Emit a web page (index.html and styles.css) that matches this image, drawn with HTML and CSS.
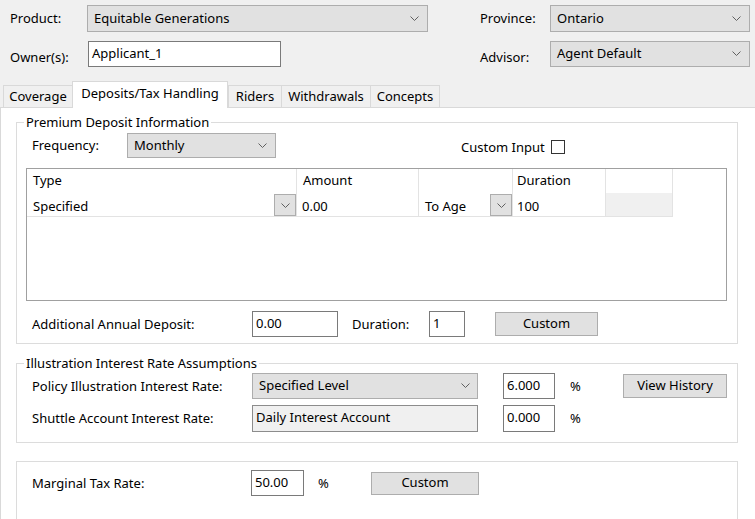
FILE: index.html
```html
<!DOCTYPE html>
<html lang="en">
<head>
<meta charset="utf-8">
<title>Deposits/Tax Handling</title>
<link rel="stylesheet" href="styles.css">
</head>
<body>
<div class="top">
  <span class="lbl">Product:</span>
  <div class="combo"><span>Equitable Generations</span><svg class="chev" width="9" height="5" viewBox="0 0 9 5"><path d="M0.5 0.5 4.5 4.5 8.5 0.5"/></svg></div>
  <span></span>
  <span class="lbl">Province:</span>
  <div class="combo"><span>Ontario</span><svg class="chev" width="9" height="5" viewBox="0 0 9 5"><path d="M0.5 0.5 4.5 4.5 8.5 0.5"/></svg></div>
  <span class="lbl lbl2">Owner(s):</span>
  <div class="text owner">Applicant_1</div>
  <span></span>
  <span class="lbl lbl2">Advisor:</span>
  <div class="combo"><span>Agent Default</span><svg class="chev" width="9" height="5" viewBox="0 0 9 5"><path d="M0.5 0.5 4.5 4.5 8.5 0.5"/></svg></div>
</div>

<div class="tabs">
  <div class="tab t-cov">Coverage</div>
  <div class="tab active t-dep">Deposits/Tax Handling</div>
  <div class="tab t-rid">Riders</div>
  <div class="tab t-wd">Withdrawals</div>
  <div class="tab last t-con">Concepts</div>
</div>

<div class="page">
  <fieldset class="group g1">
    <legend>Premium Deposit Information</legend>
    <div class="freq">
      <span class="lbl freq-lbl">Frequency:</span>
      <div class="combo freq-combo"><span>Monthly</span><svg class="chev" width="9" height="5" viewBox="0 0 9 5"><path d="M0.5 0.5 4.5 4.5 8.5 0.5"/></svg></div>
      <div class="custom"><span>Custom Input</span><span class="check"></span></div>
    </div>

    <div class="grid">
      <div class="cell h">Type</div>
      <div class="cell h">Amount</div>
      <div class="cell h"></div>
      <div class="cell h dur">Duration</div>
      <div class="cell h"></div>

      <div class="cell d"><span class="ct">Specified</span><span class="dd"><svg class="chev" width="9" height="5" viewBox="0 0 9 5"><path d="M0.5 0.5 4.5 4.5 8.5 0.5"/></svg></span></div>
      <div class="cell d amt"><span class="ct">0.00</span></div>
      <div class="cell d"><span class="ct">To Age</span><span class="dd"><svg class="chev" width="9" height="5" viewBox="0 0 9 5"><path d="M0.5 0.5 4.5 4.5 8.5 0.5"/></svg></span></div>
      <div class="cell d dur"><span class="ct">100</span></div>
      <div class="cell d grey"></div>
    </div>

    <div class="row add">
      <span class="lbl w220">Additional Annual Deposit:</span>
      <div class="text w86">0.00</div>
      <span class="lbl dur-lbl">Duration:</span>
      <div class="text w36">1</div>
      <div class="btn btn-custom1">Custom</div>
    </div>
  </fieldset>

  <fieldset class="group g2">
    <legend>Illustration Interest Rate Assumptions</legend>
    <div class="row r1">
      <span class="lbl w220">Policy Illustration Interest Rate:</span>
      <div class="combo rate-combo"><span>Specified Level</span><svg class="chev" width="9" height="5" viewBox="0 0 9 5"><path d="M0.5 0.5 4.5 4.5 8.5 0.5"/></svg></div>
      <div class="text pct-box">6.000</div>
      <span class="pct">%</span>
      <div class="btn btn-hist">View History</div>
    </div>
    <div class="row r2">
      <span class="lbl w220">Shuttle Account Interest Rate:</span>
      <div class="readonly">Daily Interest Account</div>
      <div class="text pct-box">0.000</div>
      <span class="pct">%</span>
    </div>
  </fieldset>

  <div class="group g3">
    <div class="row r3">
      <span class="lbl w219">Marginal Tax Rate:</span>
      <div class="text w53">50.00</div>
      <span class="pct pct3">%</span>
      <div class="btn btn-custom2">Custom</div>
    </div>
  </div>
</div>
</body>
</html>
```

FILE: styles.css
```css
* { box-sizing: border-box; }
html, body { margin: 0; padding: 0; }
body {
  width: 755px;
  height: 519px;
  overflow: hidden;
  background: #f0f0f0;
  font-family: "Noto Sans", "Open Sans", sans-serif;
  font-size: 13px;
  line-height: 17px;
  color: #000;
}

.chev { flex: none; display: block; }
.chev path { fill: none; stroke: #606060; stroke-width: 1; }

/* top form */
.top {
  display: grid;
  grid-template-columns: 77px 341px 52px 70px 200px;
  grid-template-rows: 27px 26px;
  row-gap: 9px;
  padding: 5px 0 0 10px;
}
.lbl { align-self: center; white-space: nowrap; }
.lbl2 { padding-top: 6px; }

.combo {
  display: flex;
  align-items: center;
  justify-content: space-between;
  background: #e1e1e1;
  border: 1px solid #adadad;
  padding: 0 8px 1px 6px;
}
.text {
  display: flex;
  align-items: center;
  background: #fff;
  border: 1px solid #7a7a7a;
  padding: 0 4px 2px 3px;
}
.owner { width: 193px; margin-left: 1px; }

/* tabs */
.tabs {
  display: flex;
  align-items: flex-end;
  height: 27px;
  margin-top: 14px;
  padding-left: 3px;
  border-bottom: 1px solid #d9d9d9;
}
.tab {
  height: 22px;
  display: flex;
  align-items: center;
  justify-content: center;
  background: #f0f0f0;
  border-top: 1px solid #d9d9d9;
  border-left: 1px solid #d9d9d9;
  padding-bottom: 1px;
}
.tab.last { border-right: 1px solid #d9d9d9; }
.tab.active {
  height: 27px;
  margin-bottom: -1px;
  background: #fff;
  border-right: 1px solid #d9d9d9;
  padding-bottom: 4px;
  position: relative;
  z-index: 1;
}
.t-cov { width: 69px; }
.t-dep { width: 156px; }
.t-rid { width: 53px; }
.t-wd { width: 89px; }
.t-con { width: 70px; }

/* tab page */
.page {
  background: #fff;
  height: 411px;
  border-left: 1px solid #d9d9d9;
  overflow: hidden;
  padding-top: 6px;
}

.group {
  margin: 0 17px 0 15px;
  border: 1px solid #dcdcdc;
  padding: 2px 10px 6px 9px;
  min-width: 0;
}
.group legend {
  padding: 0 2px;
  margin-left: -2px;
  line-height: 17px;
}

.freq { display: flex; align-items: center; height: 25px; padding-left: 6px; }
.freq-lbl { width: 95px; }
.freq-combo { width: 149px; height: 25px; }
.custom {
  display: flex;
  align-items: center;
  gap: 6px;
  margin-left: 185px;
  margin-top: 3px;
}
.check { width: 14px; height: 14px; border: 1px solid #333; background: #fff; }

/* deposit grid */
.grid {
  margin-top: 10px;
  height: 133px;
  border: 1px solid #a0a0a0;
  background: #fff;
  display: grid;
  grid-template-columns: 270px 122px 94px 93px 67px;
  grid-template-rows: 24px 24px;
  align-content: start;
}
.cell {
  display: flex;
  border-right: 1px solid #e3e3e3;
  padding-left: 6px;
}
.cell.h { align-items: center; padding-bottom: 1px; }
.cell.d { border-bottom: 1px solid #e3e3e3; align-items: stretch; }
.cell.amt { padding-left: 5px; }
.cell.dur { padding-left: 4px; }
.cell.grey { background: #f0f0f0; }
.ct { display: flex; align-items: center; padding-top: 3px; }
.dd {
  margin-left: auto;
  width: 22px;
  height: 22px;
  margin-top: 1px;
  background: #e1e1e1;
  border: 1px solid #adadad;
  display: flex;
  align-items: center;
  justify-content: center;
}

.row { display: flex; align-items: center; padding-left: 6px; }
.add { margin-top: 10px; height: 26px; }
.w220 { width: 220px; }
.w219 { width: 219px; }
.w86 { width: 86px; height: 26px; }
.w36 { width: 36px; height: 26px; }
.w53 { width: 53px; height: 26px; }
.dur-lbl { margin-left: 14px; width: 77px; }

.btn {
  display: flex;
  align-items: center;
  justify-content: center;
  background: #e1e1e1;
  border: 1px solid #adadad;
  padding-bottom: 1px;
}
.btn-custom1 { margin-left: 30px; width: 103px; height: 24px; }

.g2 { margin-top: 11px; padding-top: 1px; padding-bottom: 10px; }
.r1 { height: 26px; }
.r2 { height: 27px; margin-top: 6px; }
.rate-combo { width: 226px; height: 26px; padding-right: 7px; }
.readonly {
  width: 226px;
  height: 27px;
  display: flex;
  align-items: center;
  background: #f0f0f0;
  border: 1px solid #8c8c8c;
  padding: 0 4px 2px 3px;
}
.pct-box { width: 52px; height: 26px; margin-left: 25px; }
.r2 .pct-box { height: 27px; }
.pct { margin-left: 15px; width: 11px; }
.btn-hist { margin-left: 42px; width: 104px; height: 24px; }

.g3 { margin-top: 18px; padding-top: 8px; padding-bottom: 30px; }
.r3 { height: 26px; }
.pct3 { margin-left: 14px; }
.btn-custom2 { margin-left: 42px; width: 108px; height: 23px; }
```
